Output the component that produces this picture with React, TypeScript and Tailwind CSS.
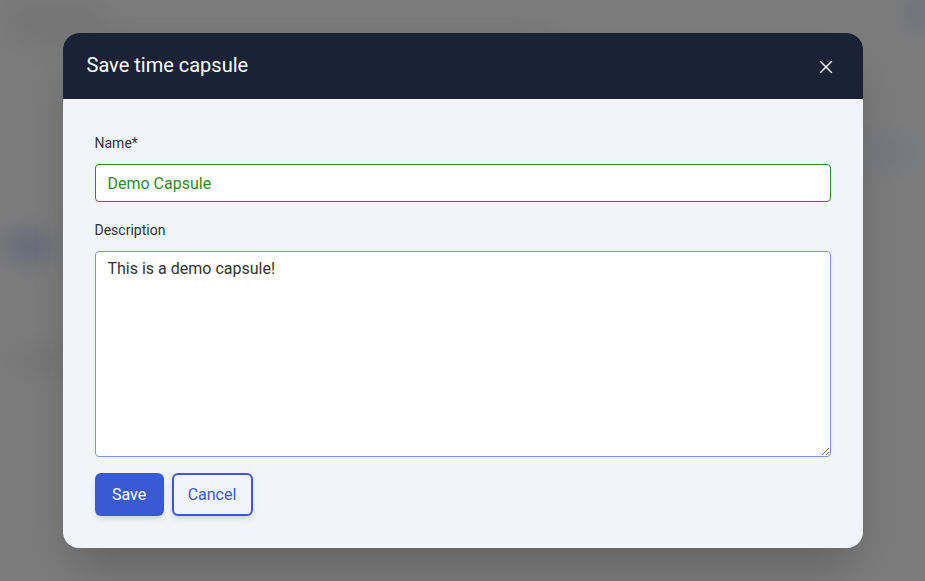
import React, { useState } from 'react';
import { X } from 'lucide-react';

const SaveCapsuleModal = () => {
  const [name, setName] = useState('Demo Capsule');
  const [description, setDescription] = useState('This is a demo capsule!');

  return (
    <div className="w-[800px] h-[515px] rounded-2xl overflow-hidden bg-[#f1f5f9] flex flex-col shadow-2xl">
      <div className="h-[66px] bg-[#1a2237] flex items-center justify-between pl-6 pr-[26px] pb-[3px] shrink-0">
        <h2 className="text-[20px] text-white font-normal">Save time capsule</h2>
        <button className="text-white mt-[4px]">
          <X size={22} strokeWidth={1.5} />
        </button>
      </div>

      <div className="flex-1 px-8 pt-[34px] pb-8 flex flex-col">
        <label className="text-[14px] leading-5 text-[#333333] mb-[11px]">Name*</label>
        <input
          value={name}
          onChange={(e) => setName(e.target.value)}
          className="h-[38px] w-full rounded border border-[#2f8a1f] bg-white px-3 text-[16px] text-[#2f8a1f] outline-none"
        />

        <label className="text-[14px] leading-5 text-[#333333] mt-[18px] mb-[11px]">Description</label>
        <textarea
          value={description}
          onChange={(e) => setDescription(e.target.value)}
          className="h-[206px] w-full rounded border border-[#7b93ec] bg-white px-3 py-[5px] text-[16px] leading-6 text-[#333333] outline-none"
        />

        <div className="flex gap-2 mt-4">
          <button className="h-[43px] w-[69px] rounded-md bg-[#3a59d4] text-white text-[16px] shadow-md">
            Save
          </button>
          <button className="h-[43px] w-[81px] rounded-md border-2 border-[#3a59d4] text-[#3a59d4] text-[16px] bg-[#f1f5f9] shadow-md">
            Cancel
          </button>
        </div>
      </div>
    </div>
  );
};

const App = () => {
  return (
    <div className="relative w-full h-[581px] overflow-hidden bg-[#7c7c7c] font-['Roboto',sans-serif]">
      {/* blurred page underneath */}
      <div className="absolute inset-0 blur-md opacity-50">
        <div className="absolute left-2 top-2 w-24 h-3 bg-[#5f5f5f] rounded" />
        <div className="absolute left-2 top-8 w-[540px] h-3 bg-[#6a6a6a] rounded" />
        <div className="absolute right-0 top-0 w-3 h-6 bg-[#2b3a8c] rounded" />
        <div className="absolute left-2 top-[236px] w-10 h-5 bg-[#3b4478] rounded-full" />
        <div className="absolute left-2 top-[355px] w-16 h-3 bg-[#686868] rounded" />
        <div className="absolute right-2 top-[140px] w-12 h-6 bg-[#6f7385] rounded" />
      </div>

      <div className="relative h-full flex items-center justify-center">
        <SaveCapsuleModal />
      </div>
    </div>
  );
};

export default App;
